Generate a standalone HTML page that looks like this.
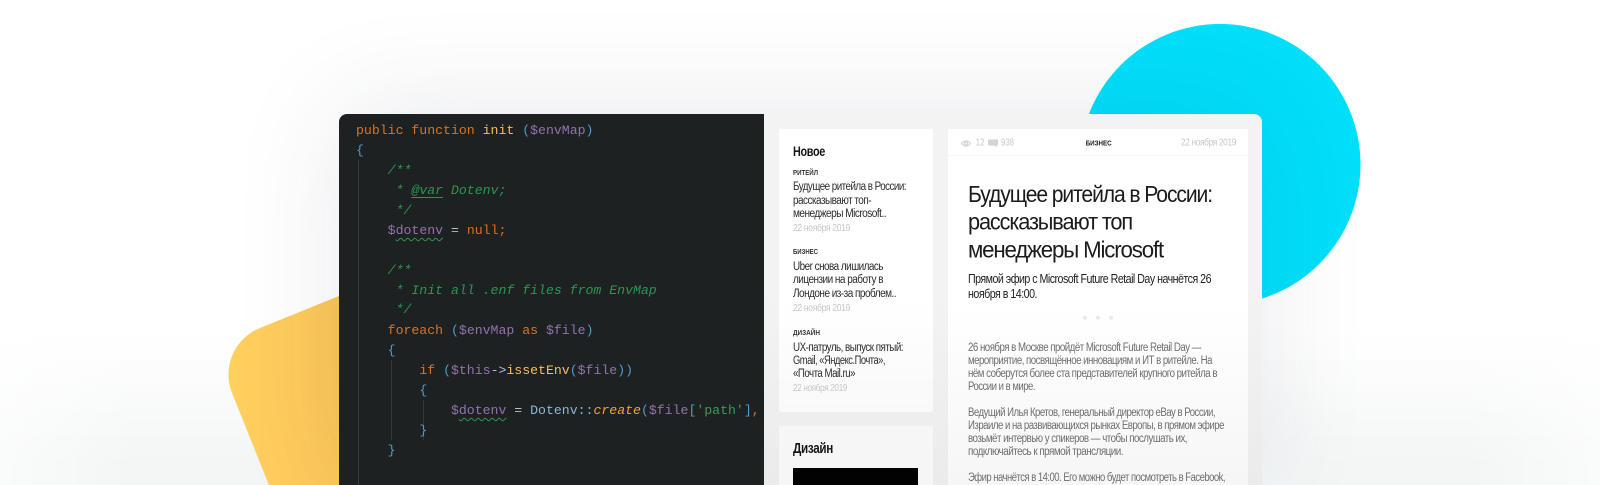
<!DOCTYPE html>
<html lang="ru">
<head>
<meta charset="utf-8">
<title>Screenshot</title>
<style>
html,body{margin:0;padding:0;background:#fff;width:1600px;height:485px;overflow:hidden;}
#root{position:relative;width:1600px;height:485px;overflow:hidden;background:#fff;}
#band{position:absolute;left:0;top:335px;width:1600px;height:150px;background:linear-gradient(180deg,rgba(244,246,246,0) 0,#f4f6f6 125px,#f4f6f6 150px);-webkit-mask-image:linear-gradient(90deg,rgba(0,0,0,.45) 0,#000 130px,#000 1470px,rgba(0,0,0,.45) 1600px);mask-image:linear-gradient(90deg,rgba(0,0,0,.45) 0,#000 130px,#000 1470px,rgba(0,0,0,.45) 1600px);}
#shapes{position:absolute;left:0;top:0;display:block;}
#win{position:absolute;left:339px;top:114px;width:923px;height:371px;border-radius:8px 8px 0 0;box-shadow:0 -6px 110px rgba(35,45,80,.10);background:linear-gradient(180deg,#f3f3f4 0,#f3f3f4 180px,#ebebec 371px);}
#dark{position:absolute;left:339px;top:114px;width:425px;height:371px;background:#1e2122;border-radius:8px 0 0 0;overflow:hidden;}
.l{position:absolute;left:17px;white-space:pre;font:13.2px/20px "Liberation Mono",monospace;color:#a9b7c6;}
.k{color:#d4752a}.f{color:#f7bd62}.v{color:#9273ad}.p{color:#4f9bc9}.c{color:#2c9650;font-style:italic}.n{color:#e56a1c}.o{color:#b4c2d0}.t{color:#8cb6d8}.s{color:#3f9a5c}.m{color:#f2a23c;font-style:italic}
.w{text-decoration:underline wavy #2c9650 1px;text-underline-offset:3px;}
.g{position:absolute;width:1px;background:#35383b;}
#text{position:absolute;left:0;top:0;display:block;}
#text text{font-family:"Liberation Sans","Noto Sans CJK SC",sans-serif;}
.h{font-size:14px;font-weight:700;fill:#171717;letter-spacing:-.4px}
.cat{font-size:7px;font-weight:700;fill:#333}
.tt{font-size:11.5px;fill:#2c2c2c;letter-spacing:-.6px}
.d{font-size:10px;fill:#c6c6c6;letter-spacing:-.4px}
.big{font-size:23px;fill:#1b1b1b;letter-spacing:-1.2px}
.sub{font-size:12.5px;fill:#222;letter-spacing:-.6px}
.bd{font-size:11.5px;fill:#6e6e6e;letter-spacing:-.6px}
.st{font-size:10px;fill:#c8c8c8}
</style>
</head>
<body>
<div id="root">
<div id="band"></div>
<svg id="shapes" width="1600" height="485" viewBox="0 0 1600 485">
<defs>
<linearGradient id="y" x1="228" x2="339" y1="0" y2="0" gradientUnits="userSpaceOnUse"><stop offset="0" stop-color="#ffd05e"/><stop offset=".6" stop-color="#ffcb5c"/><stop offset="1" stop-color="#fcc75b"/></linearGradient>
</defs>
<circle cx="1220" cy="164.500" r="140.500" fill="#00dffa"/>
<path d="M420 263 L260 328 A50 50 0 0 0 232 393 L269 485 L420 485 Z" fill="url(#y)"/>
</svg>
<div id="win"></div>
<div id="dark">
<div class="g" style="left:19px;top:46px;height:325px"></div>
<div class="g" style="left:52px;top:246px;height:80px"></div>
<div class="g" style="left:84px;top:286px;height:40px"></div>
<div class="l" style="top:7px"><span class="k">public function</span> <span class="f">init</span> <span class="p">(</span><span class="v">$envMap</span><span class="p">)</span></div>
<div class="l" style="top:27px"><span class="p">{</span></div>
<div class="l" style="top:47px"><span class="c">    /**</span></div>
<div class="l" style="top:67px"><span class="c">     * <span style="text-decoration:underline;text-underline-offset:3px">@var</span> Dotenv;</span></div>
<div class="l" style="top:87px"><span class="c">     */</span></div>
<div class="l" style="top:107px">    <span class="v">$<span class="w">dotenv</span></span> <span class="o">=</span> <span class="n">null;</span></div>
<div class="l" style="top:147px"><span class="c">    /**</span></div>
<div class="l" style="top:167px"><span class="c">     * Init all .enf files from EnvMap</span></div>
<div class="l" style="top:186px"><span class="c">     */</span></div>
<div class="l" style="top:207px">    <span class="k">foreach</span> <span class="p">(</span><span class="v">$envMap</span> <span class="k">as</span> <span class="v">$file</span><span class="p">)</span></div>
<div class="l" style="top:227px">    <span class="p">{</span></div>
<div class="l" style="top:247px">        <span class="k">if</span> <span class="p">(</span><span class="v">$this</span><span class="o">-&gt;</span><span class="f">issetEnv</span><span class="p">(</span><span class="v">$file</span><span class="p">))</span></div>
<div class="l" style="top:267px">        <span class="p">{</span></div>
<div class="l" style="top:287px">            <span class="v">$<span class="w">dotenv</span></span> <span class="o">=</span> <span class="t">Dotenv::</span><span class="m">create</span><span class="p">(</span><span class="v">$file</span><span class="p">[</span><span class="s">'path'</span><span class="p">]</span><span class="k">,</span></div>
<div class="l" style="top:307px">        <span class="p">}</span></div>
<div class="l" style="top:327px">    <span class="p">}</span></div>
</div>
<svg id="text" width="1600" height="485" viewBox="0 0 1600 485">
<defs>
<linearGradient id="cardA" x1="0" x2="0" y1="129" y2="412" gradientUnits="userSpaceOnUse"><stop offset="0" stop-color="#fff"/><stop offset=".6" stop-color="#fff"/><stop offset="1" stop-color="#f9f9f9"/></linearGradient>
<linearGradient id="cardM" x1="0" x2="0" y1="129" y2="485" gradientUnits="userSpaceOnUse"><stop offset="0" stop-color="#fff"/><stop offset=".5" stop-color="#fff"/><stop offset="1" stop-color="#f6f6f6"/></linearGradient>
</defs>
<rect x="779" y="129" width="154" height="283" fill="url(#cardA)"/>
<rect x="779" y="426" width="154" height="59" fill="#f6f6f6"/>
<rect x="793" y="468" width="125" height="17" fill="#020202"/>
<rect x="948" y="129" width="300" height="356" fill="url(#cardM)"/>
<rect x="948" y="155" width="300" height="1" fill="#f6f6f6"/>
<g>
<text class="h" x="793" y="156" textLength="32" lengthAdjust="spacingAndGlyphs">Новое</text>
<text class="cat" x="793" y="175" textLength="25" lengthAdjust="spacingAndGlyphs">РИТЕЙЛ</text>
<text class="tt" x="793" y="190" textLength="113" lengthAdjust="spacingAndGlyphs">Будущее ритейла в России:</text>
<text class="tt" x="793" y="204" textLength="78" lengthAdjust="spacingAndGlyphs">рассказывают топ-</text>
<text class="tt" x="793" y="217" textLength="93" lengthAdjust="spacingAndGlyphs">менеджеры Microsoft..</text>
<text class="d" x="793" y="231" textLength="57" lengthAdjust="spacingAndGlyphs">22 ноября 2019</text>
<text class="cat" x="793" y="254" textLength="25" lengthAdjust="spacingAndGlyphs">БИЗНЕС</text>
<text class="tt" x="793" y="270" textLength="90" lengthAdjust="spacingAndGlyphs">Uber снова лишилась</text>
<text class="tt" x="793" y="283" textLength="90" lengthAdjust="spacingAndGlyphs">лицензии на работу в</text>
<text class="tt" x="793" y="297" textLength="103" lengthAdjust="spacingAndGlyphs">Лондоне из-за проблем..</text>
<text class="d" x="793" y="311" textLength="57" lengthAdjust="spacingAndGlyphs">22 ноября 2019</text>
<text class="cat" x="793" y="335" textLength="27" lengthAdjust="spacingAndGlyphs">ДИЗАЙН</text>
<text class="tt" x="793" y="351" textLength="110" lengthAdjust="spacingAndGlyphs">UX-патруль, выпуск пятый:</text>
<text class="tt" x="793" y="364" textLength="92" lengthAdjust="spacingAndGlyphs">Gmail, «Яндекс.Почта»,</text>
<text class="tt" x="793" y="377" textLength="62" lengthAdjust="spacingAndGlyphs">«Почта Mail.ru»</text>
<text class="d" x="793" y="391" textLength="54" lengthAdjust="spacingAndGlyphs">22 ноября 2019</text>
<text class="h" style="font-size:15px" x="793" y="453" textLength="40" lengthAdjust="spacingAndGlyphs">Дизайн</text>

<g fill="none" stroke="#d4d4d4" stroke-width="1.2"><path d="M961.500 143.500 Q966 138.500 970.500 143.500 Q966 148.500 961.500 143.500 Z"/><circle cx="966" cy="143.500" r="1.500"/></g>
<path d="M989 139.500 h8 a1 1 0 0 1 1 1 v4 a1 1 0 0 1-1 1 h-.5 v2 l-2-2 h-5.500 a1 1 0 0 1-1-1 v-4 a1 1 0 0 1 1-1 Z" fill="#d4d4d4"/>
<text class="st" x="975.600" y="145.500" textLength="9" lengthAdjust="spacingAndGlyphs">12</text>
<text class="st" x="1001" y="145.500" textLength="13" lengthAdjust="spacingAndGlyphs">938</text>
<text class="cat" style="fill:#222" x="1085.700" y="145.500" textLength="26" lengthAdjust="spacingAndGlyphs">БИЗНЕС</text>
<text class="d" x="1181" y="145.500" textLength="55" lengthAdjust="spacingAndGlyphs">22 ноября 2019</text>

<text class="big" x="968" y="202" textLength="244" lengthAdjust="spacingAndGlyphs">Будущее ритейла в России:</text>
<text class="big" x="968" y="229.500" textLength="164" lengthAdjust="spacingAndGlyphs">рассказывают топ</text>
<text class="big" x="968" y="257.500" textLength="195" lengthAdjust="spacingAndGlyphs">менеджеры Microsoft</text>
<text class="sub" x="968" y="283" textLength="243" lengthAdjust="spacingAndGlyphs">Прямой эфир с Microsoft Future Retail Day начнётся 26</text>
<text class="sub" x="968" y="298" textLength="69" lengthAdjust="spacingAndGlyphs">ноября в 14:00.</text>
<g fill="#e9e9e9"><circle cx="1085" cy="317.700" r="2"/><circle cx="1098" cy="317.700" r="2"/><circle cx="1111" cy="317.700" r="2"/></g>

<text class="bd" x="968" y="351" textLength="233" lengthAdjust="spacingAndGlyphs">26 ноября в Москве пройдёт Microsoft Future Retail Day —</text>
<text class="bd" x="968" y="364" textLength="244" lengthAdjust="spacingAndGlyphs">мероприятие, посвящённое инновациям и ИТ в ритейле. На</text>
<text class="bd" x="968" y="377" textLength="249" lengthAdjust="spacingAndGlyphs">нём соберутся более ста представителей крупного ритейла в</text>
<text class="bd" x="968" y="390" textLength="67" lengthAdjust="spacingAndGlyphs">России и в мире.</text>
<text class="bd" x="968" y="416" textLength="247" lengthAdjust="spacingAndGlyphs">Ведущий Илья Кретов, генеральный директор eBay в России,</text>
<text class="bd" x="968" y="429" textLength="256" lengthAdjust="spacingAndGlyphs">Израиле и на развивающихся рынках Европы, в прямом эфире</text>
<text class="bd" x="968" y="442" textLength="219" lengthAdjust="spacingAndGlyphs">возьмёт интервью у спикеров — чтобы послушать их,</text>
<text class="bd" x="968" y="455" textLength="155" lengthAdjust="spacingAndGlyphs">подключайтесь к прямой трансляции.</text>
<text class="bd" x="968" y="481" textLength="257" lengthAdjust="spacingAndGlyphs">Эфир начнётся в 14:00. Его можно будет посмотреть в Facebook,</text>
</g>
</svg>
</div>
</body>
</html>
